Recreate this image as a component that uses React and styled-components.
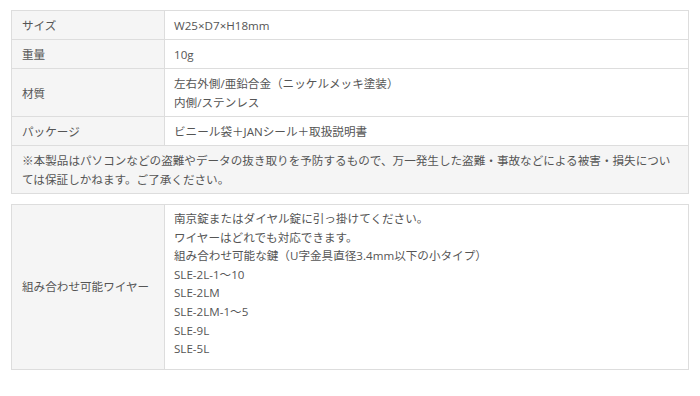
import React from 'react';
import styled, {createGlobalStyle} from 'styled-components';

const GlobalStyle = createGlobalStyle`
	body {
		margin: 0;
		background: #fff;
		font-family: "Open Sans", "Noto Sans CJK JP", sans-serif;
		color: #555;
	}
`;

const Page = styled.div`
	width: 678px;
	padding: 10px 0 0 11px;
	display: flex;
	flex-direction: column;
	gap: 10px;
`;

const SpecTable = styled.table`
	width: 100%;
	border-collapse: collapse;
	font-size: 11.6px;
	line-height: ${p => p.lineHeight || '19px'};
	table-layout: fixed;
`;

const Label = styled.th`
	width: 132px;
	background: #f5f5f5;
	border: 1px solid #ddd;
	padding: 5px 10px 4px;
	text-align: left;
	font-weight: normal;
	vertical-align: middle;
`;

const Value = styled.td`
	border: 1px solid #ddd;
	padding: ${p => p.tall ? '5px 9px 10px' : '5px 9px 4px'};
	vertical-align: middle;
`;

const Note = styled.td`
	background: #f5f5f5;
	border: 1px solid #ddd;
	padding: 5px 10px 4px;
`;

const specs = [
	{label: 'サイズ', lines: ['W25×D7×H18mm']},
	{label: '重量', lines: ['10g']},
	{label: '材質', lines: ['左右外側/亜鉛合金（ニッケルメッキ塗装）', '内側/ステンレス']},
	{label: 'パッケージ', lines: ['ビニール袋＋JANシール＋取扱説明書']}
];

const wires = [
	'南京錠またはダイヤル錠に引っ掛けてください。',
	'ワイヤーはどれでも対応できます。',
	'組み合わせ可能な鍵（U字金具直径3.4mm以下の小タイプ）',
	'SLE-2L-1～10',
	'SLE-2LM',
	'SLE-2LM-1～5',
	'SLE-9L',
	'SLE-5L'
];

function Lines({lines}) {
	return lines.map((line, i) => <React.Fragment key={i}>
		{i > 0 ? <br/> : null}
		{line}
	</React.Fragment>);
}

export default function App() {
	return <>
		<GlobalStyle/>
		<Page>
			<SpecTable>
				<tbody>
					{specs.map(row => <tr key={row.label}>
						<Label>{row.label}</Label>
						<Value><Lines lines={row.lines}/></Value>
					</tr>)}
					<tr>
						<Note colSpan={2}>
							※本製品はパソコンなどの盗難やデータの抜き取りを予防するもので、万一発生した盗難・事故などによる被害・損失につい<br/>
							ては保証しかねます。ご了承ください。
						</Note>
					</tr>
				</tbody>
			</SpecTable>
			<SpecTable lineHeight="18.6px">
				<tbody>
					<tr>
						<Label>組み合わせ可能ワイヤー</Label>
						<Value tall><Lines lines={wires}/></Value>
					</tr>
				</tbody>
			</SpecTable>
		</Page>
	</>;
}
